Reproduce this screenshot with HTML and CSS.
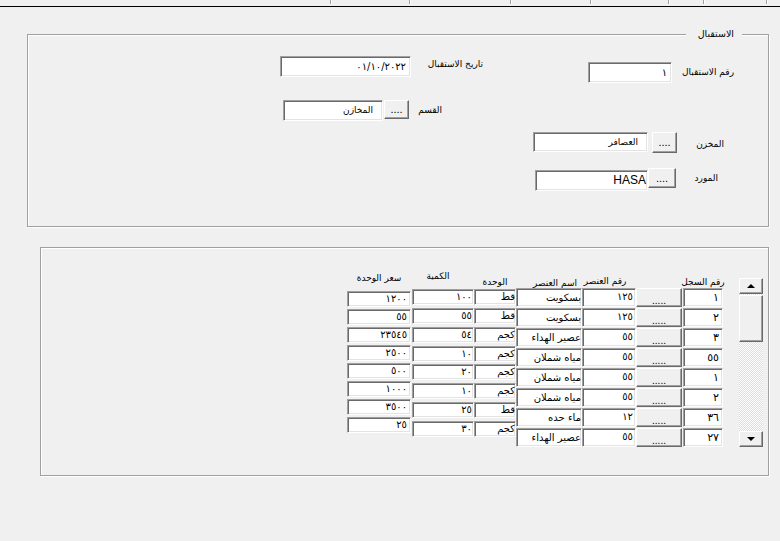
FILE: index.html
```html
<!DOCTYPE html>
<html lang="ar">
<head>
<meta charset="utf-8">
<title>الاستقبال</title>
<link rel="stylesheet" href="styles.css">
</head>
<body>
<div class="topbar">
  <span class="tick"></span><span class="tick"></span><span class="tick"></span><span class="tick"></span><span class="tick"></span><span class="tick"></span><span class="tick"></span>
</div>

<div class="group">
  <span class="legend">الاستقبال</span>
  <div class="row row-a">
    <div class="input w-date">٠١/١٠/٢٠٢٢</div>
    <div class="lbl lbl-date">تاريخ الاستقبال</div>
    <div class="input w-recno">١</div>
    <div class="lbl lbl-recno">رقم الاستقبال</div>
  </div>
  <div class="row row-b">
    <div class="input w-dept">المخازن</div>
    <div class="btn btn-dept">....</div>
    <div class="lbl lbl-dept">القسم</div>
  </div>
  <div class="row row-c">
    <div class="input w-store">العصافر</div>
    <div class="btn btn-store">....</div>
    <div class="lbl lbl-store">المخزن</div>
  </div>
  <div class="row row-d">
    <div class="input w-sup latin">HASA</div>
    <div class="btn btn-sup">....</div>
    <div class="lbl lbl-sup">المورد</div>
  </div>
</div>

<div class="panel">
  <div class="grid">
    <div class="col c-price">
      <div class="hdr">سعر الوحدة</div>
      <div class="cells">
        <div class="cell">١٢٠٠</div><div class="cell">٥٥</div><div class="cell">٢٣٥٤٥</div><div class="cell">٢٥٠٠</div>
        <div class="cell">٥٠٠</div><div class="cell">١٠٠٠</div><div class="cell">٣٥٠٠</div><div class="cell">٢٥</div>
      </div>
    </div>
    <div class="col c-qty">
      <div class="hdr">الكمية</div>
      <div class="cells">
        <div class="cell">١٠٠</div><div class="cell">٥٥</div><div class="cell">٥٤</div><div class="cell">١٠</div>
        <div class="cell">٢٠</div><div class="cell">١٠</div><div class="cell">٢٥</div><div class="cell">٣٠</div>
      </div>
    </div>
    <div class="col c-unit">
      <div class="hdr">الوحدة</div>
      <div class="cells">
        <div class="cell">قط</div><div class="cell">قط</div><div class="cell">كجم</div><div class="cell">كجم</div>
        <div class="cell">كجم</div><div class="cell">كجم</div><div class="cell">قط</div><div class="cell">كجم</div>
      </div>
    </div>
    <div class="col c-name">
      <div class="hdr">اسم العنصر</div>
      <div class="cells">
        <div class="cell">بسكويت</div><div class="cell">بسكويت</div><div class="cell">عصير الهداء</div><div class="cell">مياه شملان</div>
        <div class="cell">مياه شملان</div><div class="cell">مياه شملان</div><div class="cell">ماء حده</div><div class="cell">عصير الهداء</div>
      </div>
    </div>
    <div class="col c-code">
      <div class="hdr">رقم العنصر</div>
      <div class="cells">
        <div class="cell">١٢٥</div><div class="cell">١٢٥</div><div class="cell">٥٥</div><div class="cell">٥٥</div>
        <div class="cell">٥٥</div><div class="cell">٥٥</div><div class="cell">١٢</div><div class="cell">٥٥</div>
      </div>
    </div>
    <div class="col c-btn">
      <div class="hdr"></div>
      <div class="cells">
        <div class="btn gbtn">.....</div><div class="btn gbtn">.....</div><div class="btn gbtn">.....</div><div class="btn gbtn">.....</div>
        <div class="btn gbtn">.....</div><div class="btn gbtn">.....</div><div class="btn gbtn">.....</div><div class="btn gbtn">.....</div>
      </div>
    </div>
    <div class="col c-rec">
      <div class="hdr">رقم السجل</div>
      <div class="cells">
        <div class="cell">١</div><div class="cell">٢</div><div class="cell">٣</div><div class="cell">٥٥</div>
        <div class="cell">١</div><div class="cell">٢</div><div class="cell">٣٦</div><div class="cell">٢٧</div>
      </div>
    </div>
    <div class="scroll">
      <div class="sb-btn up"></div>
      <div class="sb-thumb"></div>
      <div class="sb-track"></div>
      <div class="sb-btn down"></div>
    </div>
  </div>
</div>
</body>
</html>
```

FILE: styles.css
```css
* { box-sizing: border-box; }
html, body { margin: 0; padding: 0; }
body {
  width: 780px;
  height: 541px;
  overflow: hidden;
  background: #f0f0f0;
  font-family: "DejaVu Sans", "Liberation Sans", sans-serif;
  font-size: 10px;
  color: #000;
}

/* top strip */
.topbar {
  display: flex;
  height: 7px;
  border-bottom: 1px solid #000;
}
.tick { width: 1px; height: 4px; background: #a0a0a0; box-shadow: 1px 0 0 #fff; }
.tick:nth-child(1) { margin-left: 330px; }
.tick:nth-child(2) { margin-left: 78px; }
.tick:nth-child(3) { margin-left: 100px; }
.tick:nth-child(4) { margin-left: 79px; }
.tick:nth-child(5) { margin-left: 77px; }
.tick:nth-child(6) { margin-left: 34px; }
.tick:nth-child(7) { margin-left: 62px; }

/* etched group box */
.group {
  position: relative;
  margin: 27px 0 0 27px;
  width: 742px;
  height: 193px;
  border: 1px solid #a0a0a0;
  box-shadow: inset 1px 1px 0 #fff, 1px 1px 0 #fff;
}
.legend {
  position: absolute;
  top: -7px;
  right: 26px;
  padding: 0 8px 0 12px;
  background: #f0f0f0;
  line-height: 12px;
  font-size: 9.5px;
  direction: rtl;
  white-space: nowrap;
}

.row { display: flex; align-items: flex-start; }
.row-a { margin-top: 21px; }
.row-b { margin-top: 17px; }
.row-c { margin-top: 11px; }
.row-d { margin-top: 15px; }

/* sunken text box */
.input {
  height: 21px;
  background: #fff;
  border: 1px solid;
  border-color: #a0a0a0 #fff #fff #a0a0a0;
  box-shadow: inset 1px 1px 0 #696969, inset -1px -1px 0 #e3e3e3;
  padding: 0 4px;
  direction: rtl;
  text-align: right;
  line-height: 19px;
  white-space: nowrap;
  overflow: hidden;
}
.latin { font-family: "Liberation Sans", sans-serif; font-size: 12px; padding-right: 1px; }

/* raised button */
.btn {
  background: #f0f0f0;
  border: 1px solid;
  border-color: #fff #696969 #696969 #fff;
  box-shadow: inset -1px -1px 0 #a0a0a0;
  display: flex;
  align-items: center;
  justify-content: center;
  font-family: "Liberation Sans", sans-serif;
  font-size: 11px;
  line-height: 1;
}

.lbl {
  line-height: 12px;
  font-size: 9px;
  direction: rtl;
  text-align: right;
  white-space: nowrap;
}

.w-date { margin-left: 252px; width: 131px; }
.lbl-date { margin-left: 12px; margin-top: 2px; width: 60px; }
.w-recno { margin-left: 105px; margin-top: 6px; width: 84px; }
.lbl-recno { margin-left: 12px; margin-top: 10px; width: 50px; }

.w-dept { margin-left: 255px; width: 100px; font-size: 9px; padding-right: 9px; }
.btn-dept { margin-left: 1px; width: 25px; height: 19px; }
.lbl-dept { margin-left: 17px; margin-top: 4px; width: 16px; }

.w-store { margin-left: 505px; width: 115px; height: 20px; line-height: 18px; font-size: 9px; padding-right: 9px; }
.btn-store { margin-left: 4px; width: 25px; height: 21px; }
.lbl-store { margin-left: 17px; margin-top: 6px; width: 30px; }

.w-sup { margin-left: 507px; margin-top: 2px; width: 113px; }
.btn-sup { width: 28px; height: 20px; }
.lbl-sup { margin-left: 17px; margin-top: 4px; width: 25px; }

/* lower panel */
.panel {
  margin: 20px 0 0 40px;
  width: 729px;
  height: 229px;
  border: 1px solid #a0a0a0;
  box-shadow: inset 1px 1px 0 #fff, 1px 1px 0 #fff;
}
.grid {
  display: flex;
  align-items: flex-start;
  margin: 20px 0 0 306px;
}
.col { display: flex; flex-direction: column; }
.cells { display: flex; flex-direction: column; }
.hdr {
  display: flex;
  justify-content: center;
  line-height: 12px;
  font-size: 9px;
  direction: rtl;
  white-space: nowrap;
}
.cell {
  background: #fff;
  border: 1px solid;
  border-color: #a0a0a0 #fff #fff #a0a0a0;
  box-shadow: inset 1px 1px 0 #696969, inset -1px -1px 0 #e3e3e3;
  direction: rtl;
  text-align: right;
  white-space: nowrap;
  overflow: visible;
  font-size: 10px;
}

.c-price { width: 64px; }
.c-price .hdr { height: 23px; padding-top: 4px; }
.c-price .cells { gap: 2px; }
.c-price .cell { height: 16px; line-height: 14px; padding-right: 3px; }

.c-qty { width: 62px; margin-left: 1px; }
.c-qty .hdr { height: 21px; padding-top: 2px; padding-right: 10px; }
.c-qty .cells { gap: 2.86px; }
.c-qty .cell { height: 16px; line-height: 14px; padding-right: 1px; }

.c-unit { width: 42px; }
.c-unit .hdr { height: 21px; padding-top: 8px; }
.c-unit .cells { gap: 2.86px; }
.c-unit .cell { height: 16px; line-height: 13px; padding-right: 0; }

.c-name { width: 66px; }
.c-name .hdr { height: 20px; padding-top: 9px; padding-left: 12px; }
.c-name .cells { gap: 1px; }
.c-name .cell { height: 19px; line-height: 17px; padding-right: 0; }

.c-code { width: 54px; }
.c-code .hdr { height: 20px; padding-top: 7px; padding-right: 8px; }
.c-code .cells { gap: 1px; }
.c-code .cell { height: 19px; line-height: 15px; padding-right: 2px; }

.c-btn { width: 46px; }
.c-btn .hdr { height: 20px; }
.c-btn .cells { gap: 1px; }
.gbtn { height: 19px; padding-top: 6px; font-size: 10px; }

.c-rec { width: 40px; margin-left: 1px; }
.c-rec .hdr { height: 20px; padding-top: 8px; }
.c-rec .cells { gap: 1px; }
.c-rec .cell { height: 19px; line-height: 18px; padding-right: 3px; font-size: 11px; }

/* scrollbar */
.scroll {
  display: flex;
  flex-direction: column;
  width: 24px;
  height: 169px;
  margin-left: 16px;
  margin-top: 10px;
  background: repeating-conic-gradient(#ffffff 0 25%, #dcdcdc 0 50%) 0 0 / 2px 2px;
}
.sb-btn, .sb-thumb {
  background: #f0f0f0;
  border: 1px solid;
  border-color: #fff #696969 #696969 #fff;
  box-shadow: inset -1px -1px 0 #a0a0a0;
}
.sb-btn {
  height: 16px;
  display: flex;
  align-items: center;
  justify-content: center;
}
.sb-btn::after {
  content: "";
  width: 0;
  height: 0;
  border-left: 4px solid transparent;
  border-right: 4px solid transparent;
}
.sb-btn.up::after { border-bottom: 4px solid #000; }
.sb-btn.down::after { border-top: 4px solid #000; }
.sb-thumb { height: 47px; margin-top: 1px; }
.sb-track { flex: 1; }
```
